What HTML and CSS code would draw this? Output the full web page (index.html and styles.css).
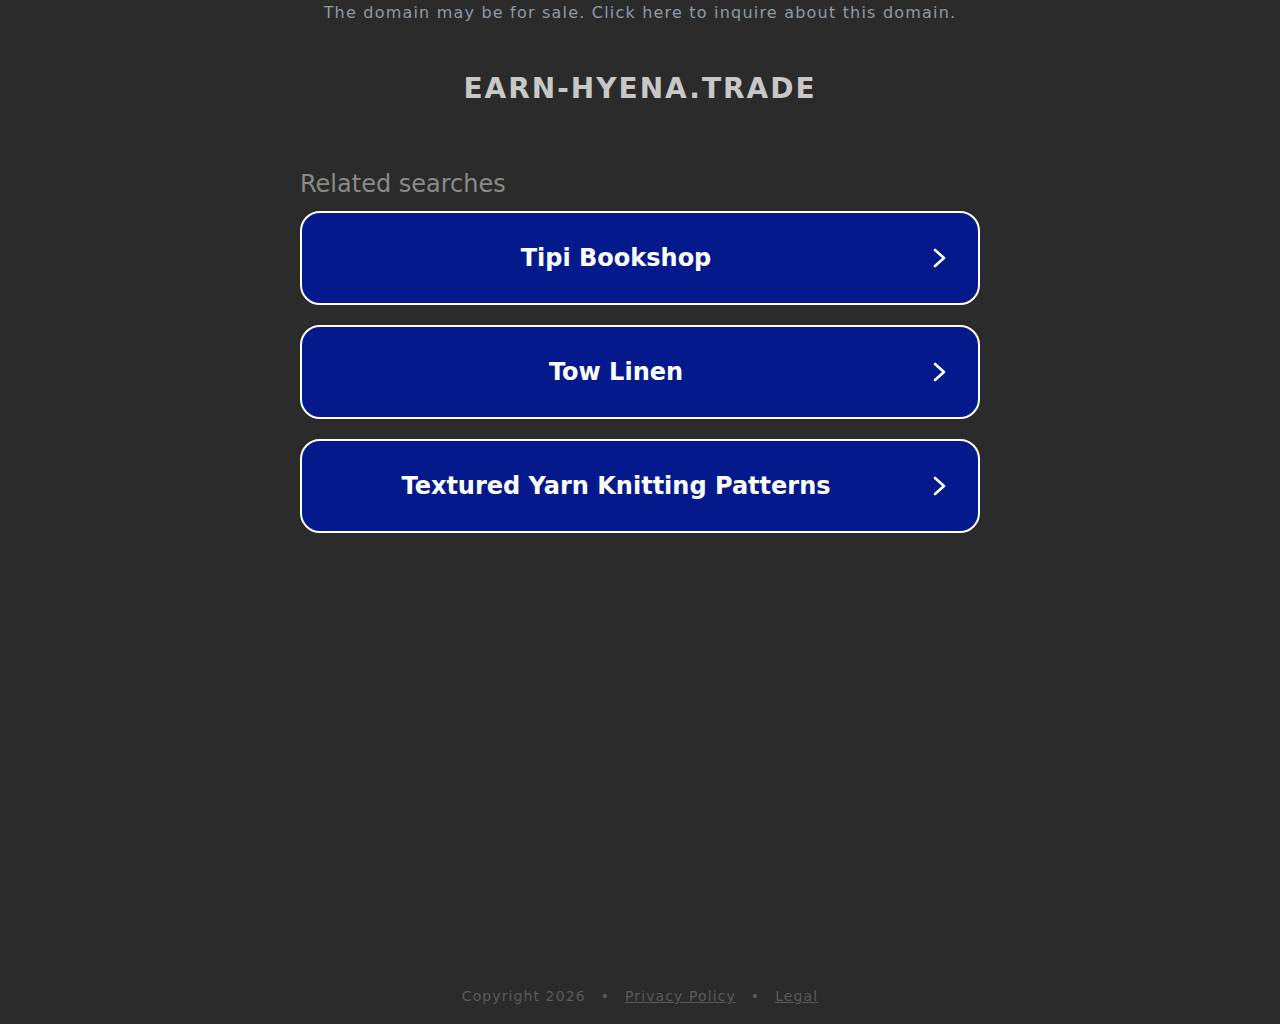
FILE: index.html
```html
<!DOCTYPE html>
<html lang="en">
<head>
  <meta charset="UTF-8" />
  <meta name="viewport" content="width=device-width, initial-scale=1.0" />
  <title>earn-hyena.trade</title>
  <link rel="stylesheet" href="styles.css">
</head>
<body>
  <div class="page">
    <div class="sale-banner">
      <a href="#">The domain may be for sale. Click here to inquire about this domain.</a>
    </div>

    <h1 class="domain">EARN-HYENA.TRADE</h1>

    <div class="related">
      <div class="related-title">Related searches</div>
      <div class="search-list">
        <a class="search-btn" href="#">
          <span class="search-label">Tipi Bookshop</span>
          <svg class="arrow" width="20" height="24" viewBox="0 0 20 24"><path d="M5 4 L14 12 L5 20" fill="none" stroke="#fff" stroke-width="2.6" stroke-linecap="round" stroke-linejoin="round"/></svg>
        </a>
        <a class="search-btn" href="#">
          <span class="search-label">Tow Linen</span>
          <svg class="arrow" width="20" height="24" viewBox="0 0 20 24"><path d="M5 4 L14 12 L5 20" fill="none" stroke="#fff" stroke-width="2.6" stroke-linecap="round" stroke-linejoin="round"/></svg>
        </a>
        <a class="search-btn" href="#">
          <span class="search-label">Textured Yarn Knitting Patterns</span>
          <svg class="arrow" width="20" height="24" viewBox="0 0 20 24"><path d="M5 4 L14 12 L5 20" fill="none" stroke="#fff" stroke-width="2.6" stroke-linecap="round" stroke-linejoin="round"/></svg>
        </a>
      </div>
    </div>

    <div class="footer">
      <span>Copyright 2026</span>
      <span class="dot">•</span>
      <a href="#">Privacy Policy</a>
      <span class="dot">•</span>
      <a href="#">Legal</a>
    </div>
  </div>
</body>
</html>
```

FILE: styles.css
```css
html, body {
  margin: 0;
  padding: 0;
  height: 100%;
}

body {
  background: #2b2b2b;
  font-family: "DejaVu Sans", sans-serif;
}

.page {
  display: flex;
  flex-direction: column;
  align-items: center;
  min-height: 100vh;
}

.sale-banner {
  padding-top: 4px;
  font-size: 16px;
  letter-spacing: 1.2px;
  line-height: 18px;
}

.sale-banner a {
  color: #8e9aa6;
  text-decoration: none;
}

.domain {
  margin: 50px 0 0;
  font-size: 28px;
  line-height: 34px;
  letter-spacing: 2px;
  font-weight: bold;
  color: #c8c8c8;
}

.related {
  width: 680px;
  margin-top: 63px;
}

.related-title {
  font-size: 24px;
  line-height: 30px;
  color: #8a8a8a;
  margin-bottom: 12px;
}

.search-list {
  display: flex;
  flex-direction: column;
  gap: 20px;
}

.search-btn {
  display: flex;
  align-items: center;
  height: 94px;
  box-sizing: border-box;
  border: 2px solid #fff;
  border-radius: 20px;
  background: #041a8c;
  text-decoration: none;
  padding: 0 28px 0 0;
}

.search-label {
  flex: 1;
  text-align: center;
  color: #fff;
  font-size: 24px;
  font-weight: bold;
}

.arrow {
  flex: none;
}

.footer {
  margin-top: auto;
  padding-bottom: 20px;
  font-size: 14px;
  letter-spacing: 1.1px;
  color: #5a5a5a;
  display: flex;
  gap: 15px;
}

.footer a {
  color: #5a5a5a;
}

.dot {
  color: #5a5a5a;
}
```
